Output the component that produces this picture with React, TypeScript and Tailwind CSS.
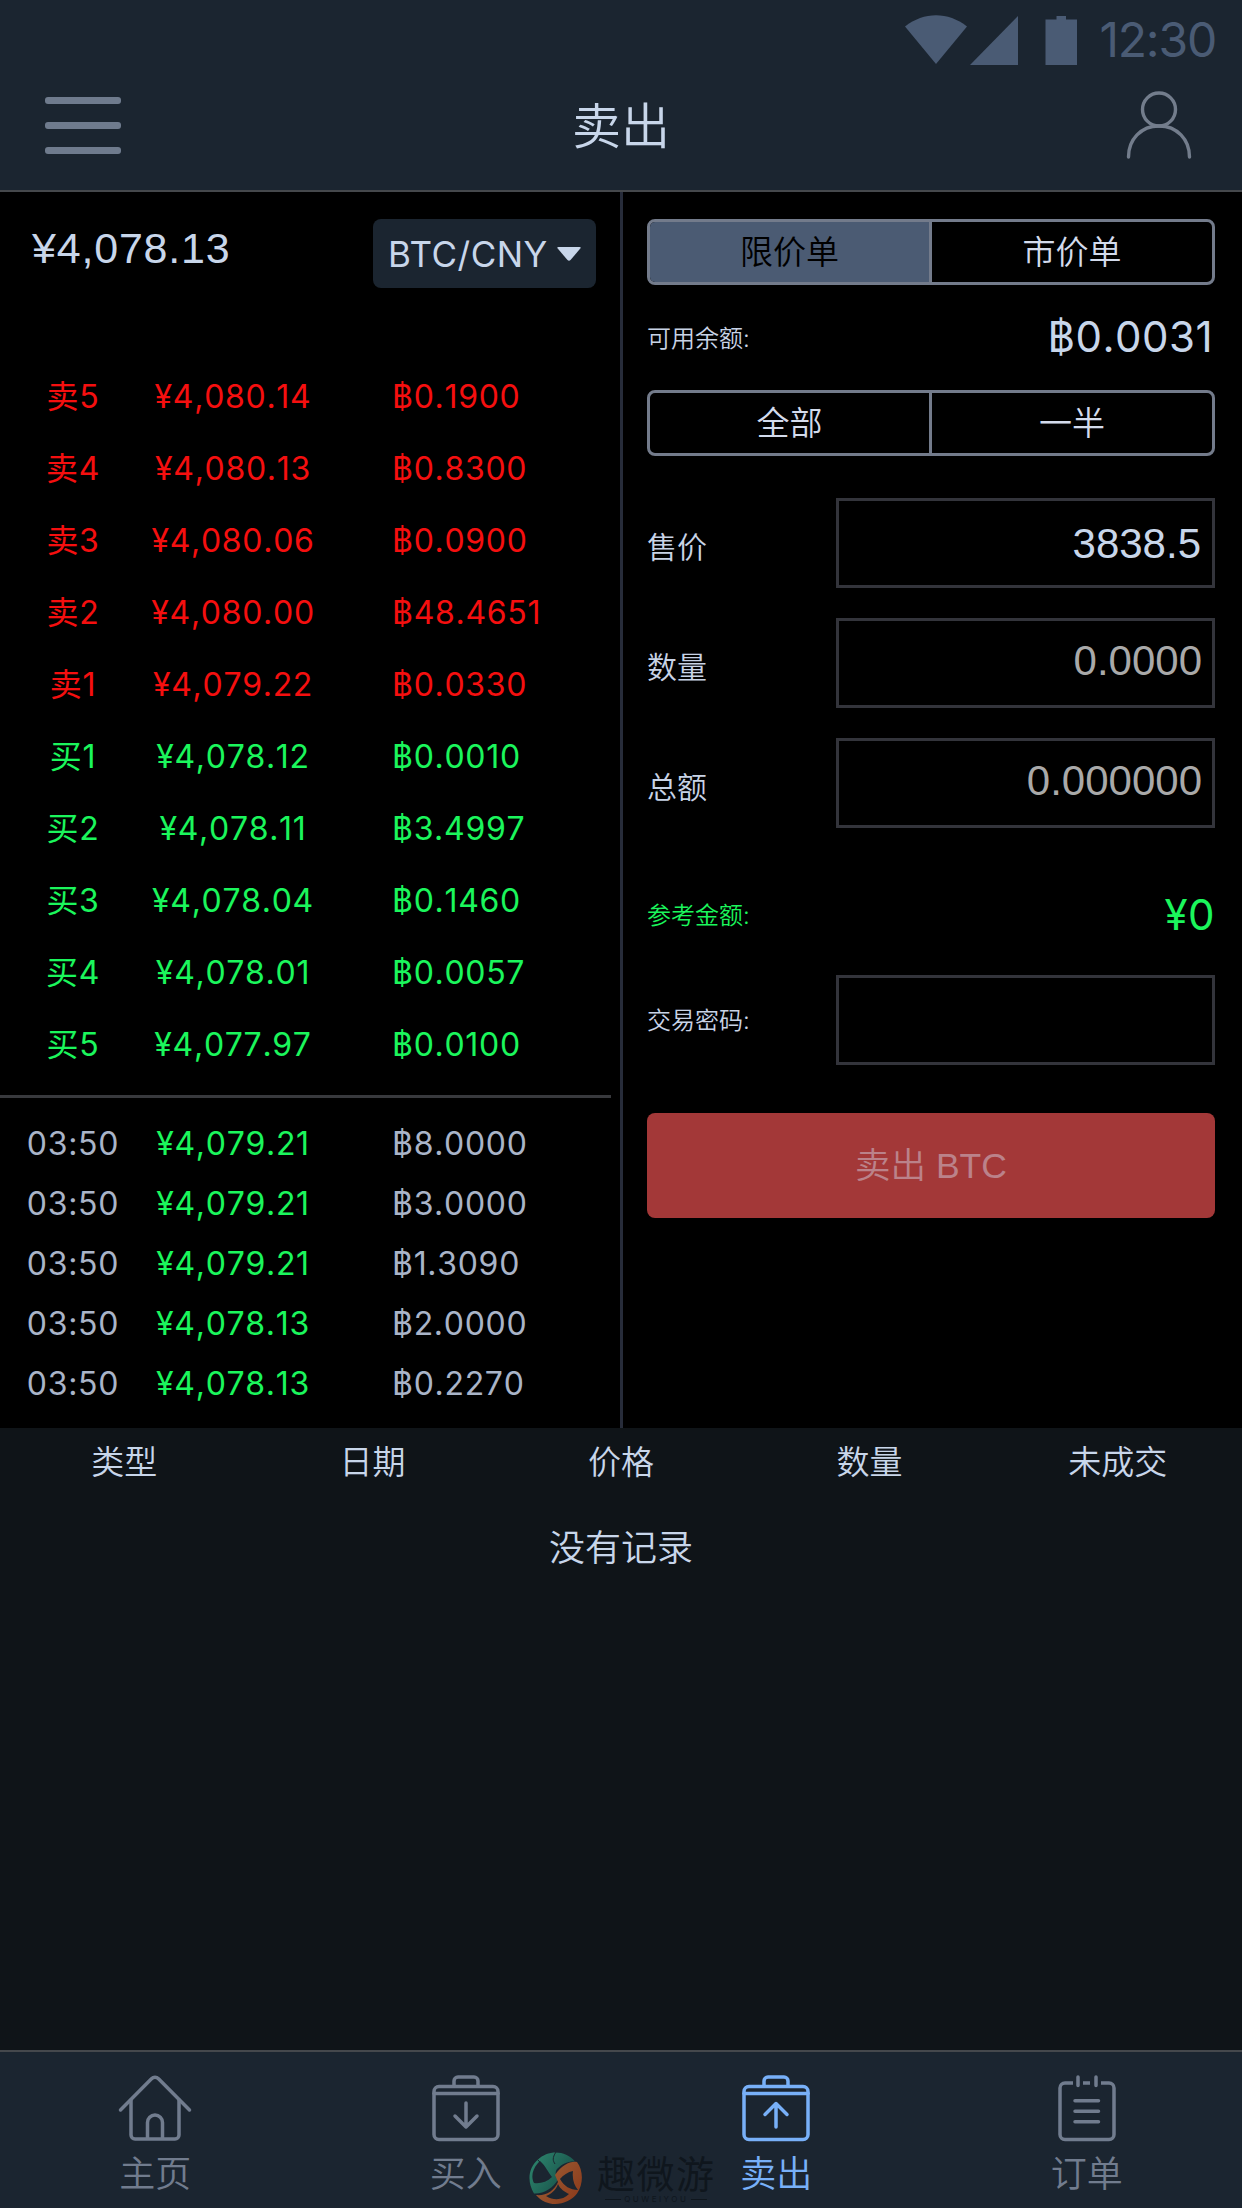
import type { ReactNode } from "react";
import clsx from "clsx";

type Order = { label: string; price: string; amount: string; side: "sell" | "buy" };
type Trade = { time: string; price: string; amount: string };

const ORDERS: Order[] = [
  { label: "卖5", price: "¥4,080.14", amount: "฿0.1900", side: "sell" },
  { label: "卖4", price: "¥4,080.13", amount: "฿0.8300", side: "sell" },
  { label: "卖3", price: "¥4,080.06", amount: "฿0.0900", side: "sell" },
  { label: "卖2", price: "¥4,080.00", amount: "฿48.4651", side: "sell" },
  { label: "卖1", price: "¥4,079.22", amount: "฿0.0330", side: "sell" },
  { label: "买1", price: "¥4,078.12", amount: "฿0.0010", side: "buy" },
  { label: "买2", price: "¥4,078.11", amount: "฿3.4997", side: "buy" },
  { label: "买3", price: "¥4,078.04", amount: "฿0.1460", side: "buy" },
  { label: "买4", price: "¥4,078.01", amount: "฿0.0057", side: "buy" },
  { label: "买5", price: "¥4,077.97", amount: "฿0.0100", side: "buy" },
];

const TRADES: Trade[] = [
  { time: "03:50", price: "¥4,079.21", amount: "฿8.0000" },
  { time: "03:50", price: "¥4,079.21", amount: "฿3.0000" },
  { time: "03:50", price: "¥4,079.21", amount: "฿1.3090" },
  { time: "03:50", price: "¥4,078.13", amount: "฿2.0000" },
  { time: "03:50", price: "¥4,078.13", amount: "฿0.2270" },
];

const COLUMNS = ["类型", "日期", "价格", "数量", "未成交"];

function StatusBar() {
  return (
    <div className="flex h-[78px] items-center justify-end pt-px pr-[26px] text-[#4a5b74]">
      <svg width="176" height="52" viewBox="0 0 176 52" fill="currentColor">
        <path d="M0 12.500C19 -2.500 43 -2.500 62 12.500L31 50Z" />
        <path d="M113 2V51H65Z" />
        <path d="M151.500 2h9.500v3.500h11V51h-31.500V5.500h11z" />
      </svg>
      <span className="ml-[18px] text-[48px] leading-none tracking-[-1.200px]">12:30</span>
    </div>
  );
}

function Header() {
  return (
    <header className="h-[192px] border-b-2 border-[#45484c] bg-[#1b2530]">
      <StatusBar />
      <div className="grid h-[94px] grid-cols-[1fr_auto_1fr] items-center pr-[50px] pl-[45px]">
        <div className="flex flex-col gap-[18px]">
          <span className="h-[7px] w-[76px] rounded-[3px] bg-[#6f7b8d]" />
          <span className="h-[7px] w-[76px] rounded-[3px] bg-[#6f7b8d]" />
          <span className="h-[7px] w-[76px] rounded-[3px] bg-[#6f7b8d]" />
        </div>
        <h1 className="pt-[3px] pl-[5px] text-[49px] font-[350] leading-none text-[#c8d6ea]">卖出</h1>
        <svg className="justify-self-end" width="66" height="68" viewBox="0 0 66 68" fill="none" stroke="#737d8c" strokeWidth="3.400" strokeLinecap="round">
          <circle cx="33" cy="18.500" r="16.500" />
          <path d="M2.500 66C2.500 48.500 15 35 33 35S63.500 48.500 63.500 66" />
        </svg>
      </div>
    </header>
  );
}

function BookRow({ className, cells }: { className: string; cells: [ReactNode, ReactNode, ReactNode] }) {
  return (
    <div
      className={clsx(
        "grid grid-cols-[146px_174px_1fr] items-center pt-px text-[32px] leading-none tracking-[0.700px] [font-kerning:none]",
        className,
      )}
    >
      <div className="text-center">{cells[0]}</div>
      <div className="text-center">{cells[1]}</div>
      <div className="pl-[72px]">{cells[2]}</div>
    </div>
  );
}

function OrderBook() {
  return (
    <section className="w-[620px]">
      <div className="flex h-[168px] items-start justify-between pt-[27px] pr-6 pl-8">
        <span className="pt-[8px] font-['Liberation_Sans',sans-serif] text-[43px] leading-none tracking-[0.800px] text-[#c8d6ea]">
          ¥4,078.13
        </span>
        <button className="flex h-[69px] w-[223px] items-center justify-between rounded-lg bg-[#1b2530] pt-[2px] pr-[15px] pl-[15px] text-[35px] font-[370] leading-none tracking-[0.500px] text-[#c8d6ea]">
          BTC/CNY
          <svg className="mb-[2px]" width="24" height="14" viewBox="0 0 24 14" fill="currentColor">
            <path d="M1.500 0h21q2 0 .8 1.600L13.500 13q-1.500 1.500-3 0L.7 1.600Q-.5 0 1.500 0z" />
          </svg>
        </button>
      </div>
      {ORDERS.map((o) => (
        <BookRow
          key={o.label}
          className={clsx("h-[72px]", o.side === "sell" ? "text-[#f50f0f]" : "text-[#1bf65c]")}
          cells={[o.label, o.price, o.amount]}
        />
      ))}
      <div className="mt-[15px] mr-[9px] mb-[15px] h-[3px] bg-[#38393d]" />
      {TRADES.map((t, i) => (
        <BookRow
          key={i}
          className="h-[60px] text-[#a9b4c8]"
          cells={[t.time, <span className="text-[#1bf65c]">{t.price}</span>, t.amount]}
        />
      ))}
    </section>
  );
}

function Segmented({ items, active }: { items: string[]; active?: number }) {
  return (
    <div className="grid h-[66px] grid-cols-[279px_1fr] overflow-hidden rounded-lg border-[3px] border-[#737b8b]">
      {items.map((item, i) => (
        <button
          key={item}
          className={clsx(
            "text-[33px] font-[350] leading-none",
            i > 0 && "border-l-[3px] border-[#737b8b]",
            i === active ? "bg-[#4b5b73] text-black" : "text-[#d3dbec]",
          )}
        >
          {item}
        </button>
      ))}
    </div>
  );
}

function Field({ label, small, children }: { label: string; small?: boolean; children?: ReactNode }) {
  return (
    <div className="flex h-[90px] items-center justify-between">
      <label className={clsx("font-[350] leading-none text-[#c8d3e6]", small ? "pt-[2px] text-[24px]" : "pt-[8px] text-[30px]")}>
        {label}
      </label>
      <div className="flex h-full w-[379px] items-center justify-end border-[3px] border-[#33343b] pr-[10px] font-['Liberation_Sans',sans-serif] text-[42px] leading-none">
        {children}
      </div>
    </div>
  );
}

function SellForm() {
  return (
    <section className="flex flex-1 flex-col border-l-[3px] border-[#272c3a] pt-[27px] pr-[27px] pl-6">
      <Segmented items={["限价单", "市价单"]} active={0} />
      <div className="flex h-[105px] items-center justify-between leading-none">
        <span className="pt-[2px] text-[24px] font-[350] text-[#c8d3e6]">可用余额:</span>
        <span className="pr-[2px] pb-[2px] text-[42px] tracking-[0.500px] text-[#c8d6ea] [font-kerning:none]">
          ฿0.0031
        </span>
      </div>
      <Segmented items={["全部", "一半"]} />
      <div className="mt-[42px] flex flex-col gap-[30px]">
        <Field label="售价">
          <span className="pt-[2px] pr-px text-[#c8d6ea]">3838.5</span>
        </Field>
        <Field label="数量">
          <span className="pb-[4px] text-[#a9a9a9]">0.0000</span>
        </Field>
        <Field label="总额">
          <span className="pb-[4px] text-[#a9a9a9]">0.000000</span>
        </Field>
      </div>
      <div className="mt-[57px] mb-[30px] flex h-[60px] items-center justify-between leading-none text-[#1bf65c]">
        <span className="pt-[2px] text-[24px] font-[350]">参考金额:</span>
        <span className="text-[42px] tracking-[0.500px]">¥0</span>
      </div>
      <Field label="交易密码:" small />
      <button className="mt-12 h-[105px] rounded-lg bg-[#a33838] pt-[2px] font-['Liberation_Sans','Noto_Sans_CJK_SC',sans-serif] text-[35.500px] font-[350] leading-none text-[#bb828a]">
        卖出 BTC
      </button>
    </section>
  );
}

function Records() {
  return (
    <section className="flex-1 bg-[#0f1418] text-center font-[350] text-[#c8d6ea]">
      <div className="grid h-[66px] grid-cols-5 items-center pt-[2px] text-[33px] leading-none">
        {COLUMNS.map((c) => (
          <span key={c}>{c}</span>
        ))}
      </div>
      <p className="pt-[36px] text-[36px] leading-none">没有记录</p>
    </section>
  );
}

function HomeIcon() {
  return (
    <>
      <path d="M3.500 37L34.500 5.800a5 5 0 0 1 7 0L72.500 37" />
      <path d="M14 27V62a4 4 0 0 0 4 4H58a4 4 0 0 0 4-4V27" />
      <path d="M30.500 65V49.500a7.500 7.500 0 0 1 15 0V65" />
    </>
  );
}

function CaseIcon({ arrow }: { arrow: string }) {
  return (
    <>
      <rect x="6" y="13.500" width="64" height="53" rx="5" />
      <path d="M6 20.500H70" />
      <path d="M26 13V8a4 4 0 0 1 4-4H46a4 4 0 0 1 4 4V13" />
      <path d={arrow} />
    </>
  );
}

function OrdersIcon() {
  return (
    <>
      <path d="M24 10H16a5 5 0 0 0-5 5V61.500a5 5 0 0 0 5 5H60a5 5 0 0 0 5-5V15a5 5 0 0 0-5-5H52M34 10H41" strokeLinecap="butt" />
      <path d="M29 4V12.500M47 4V12.500M26 27.700H49.500M26 38.300H49.500M26 48.800H49.500" />
    </>
  );
}

function Tab({ label, active, children }: { label: string; active?: boolean; children: ReactNode }) {
  return (
    <button className={clsx("flex flex-1 flex-col items-center pt-[21px]", active ? "text-[#78b0f8]" : "text-[#717c8e]")}>
      <svg width="76" height="70" viewBox="0 0 76 70" fill="none" stroke="currentColor" strokeWidth="3.500" strokeLinecap="round" strokeLinejoin="round">
        {children}
      </svg>
      <span className="mt-[13px] text-[36px] font-[350] leading-none">{label}</span>
    </button>
  );
}

function Watermark() {
  return (
    <div className="absolute bottom-[3px] left-[529px] flex items-start gap-[15px] text-[#0f161d]">
      <svg width="53" height="53" viewBox="0 0 53 53">
        <defs>
          <linearGradient id="wmGreen" x1="0" y1="0" x2="1" y2="0.600">
            <stop offset="0" stopColor="#2f8a70" />
            <stop offset="1" stopColor="#174f48" />
          </linearGradient>
          <linearGradient id="wmOrange" x1="0" y1="0" x2="1" y2="0.700">
            <stop offset="0" stopColor="#9c6238" />
            <stop offset="1" stopColor="#8d3d1d" />
          </linearGradient>
        </defs>
        <path fill="url(#wmGreen)" d="M9 7.500C18-1.500 36-3 46 9.500C40 9 34 11 28 17C26 20 26 22 29.500 27C24 36 15 42 5 41.500C-2 30-1 16 9 7.500ZM9 11C3 18 2 25 5 31C11 32 18 30 23 25C19 20 16 13 11 9Z" fillRule="evenodd" />
        <path fill="none" stroke="#1b2530" strokeWidth="1" d="M9 8C13 12 15 16 17 20M27 0C23 6 24 9 26 12" />
        <path fill="url(#wmOrange)" d="M48 10C54 18 55 31 48 41.500C40 52 20 58 7 43C17 44 25 39 29 30L26 23C33 13 41 9 48 10ZM31 27C35 34 41 38 49 38C45 33 43 27 44 19C39 20 34 23 31 27ZM29 32C27 38 22 42 17 44C25 49 34 48 40 42C36 40 31 37 29 32Z" fillRule="evenodd" />
      </svg>
      <div className="flex flex-col items-center pt-[3px]">
        <span className="text-[38px] leading-none tracking-[1.500px]">趣微游</span>
        <span className="mt-[2px] flex items-center gap-[3px] text-[8px] leading-none tracking-[2.500px]">
          <i className="h-px w-[16px] bg-current" />
          QUWEIYOU
          <i className="h-px w-[16px] bg-current" />
        </span>
      </div>
    </div>
  );
}

export default function App() {
  return (
    <div className="relative flex h-[2208px] w-[1242px] flex-col overflow-hidden bg-black font-['Inter','Noto_Sans_CJK_SC',sans-serif]">
      <Header />
      <main className="flex h-[1236px]">
        <OrderBook />
        <SellForm />
      </main>
      <Records />
      <nav className="flex h-[158px] border-t-2 border-[#45484c] bg-[#1b2530]">
        <Tab label="主页">
          <HomeIcon />
        </Tab>
        <Tab label="买入">
          <CaseIcon arrow="M38 30V54M27 43L38 54L49 43" />
        </Tab>
        <Tab label="卖出" active>
          <CaseIcon arrow="M38 54V30.500M27 41.500L38 30.500L49 41.500" />
        </Tab>
        <Tab label="订单">
          <OrdersIcon />
        </Tab>
      </nav>
      <Watermark />
    </div>
  );
}
